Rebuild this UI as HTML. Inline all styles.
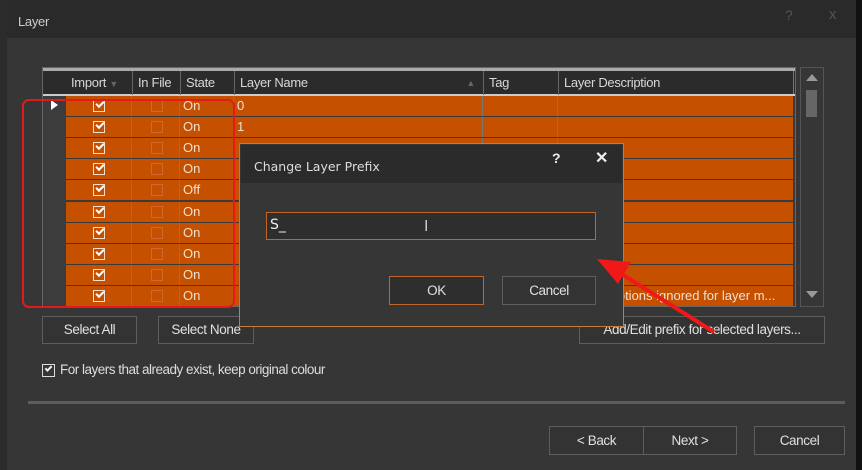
<!DOCTYPE html>
<html><head><meta charset="utf-8"><style>
*{margin:0;padding:0;box-sizing:border-box}
body{width:862px;height:470px;background:#363636;position:relative;overflow:hidden;font-family:"Liberation Sans",sans-serif;color:#ddd;font-size:13px}
.a{position:absolute}
.btn{position:absolute;border:1px solid #5e5e5e;background:#333;color:#e0e0e0;text-align:center;font-size:13.5px;letter-spacing:-0.4px}
.row{position:absolute;left:66px;width:727px;height:20px}
.c{position:absolute;top:0;height:20px;background:#c55000;line-height:20px;color:#f0e0d0;font-size:13px;padding-left:3px}
.hd{position:absolute;top:0;height:24px;line-height:24px;color:#d8d8d8;font-size:13px;letter-spacing:-0.3px;padding-left:5px;border-left:1px solid #666}
.cb{position:absolute;left:27px;top:4px;width:12px;height:12px;border:1.5px solid #f4e0d0}
.cb:after{content:"";position:absolute;left:2px;top:0px;width:6px;height:3px;border-left:2px solid #fff;border-bottom:2px solid #fff;transform:rotate(-45deg)}
.fb{position:absolute;left:19px;top:4px;width:12px;height:12px;border:1px solid #cf6a2a}
</style></head><body>
<div class="a" style="left:0;top:0;width:862px;height:38px;background:#2a2a2a"></div>
<div class="a" style="left:0;top:0;width:7px;height:470px;background:#2c2c2c"></div>
<div class="a" style="left:856px;top:0;width:6px;height:470px;background:#111"></div>
<div class="a" style="left:18px;top:14px;font-size:13px;color:#ccc;letter-spacing:-0.3px">Layer</div>
<div class="a" style="left:785px;top:7px;color:#555;font-size:14px">?</div>
<div class="a" style="left:829px;top:6px;color:#555;font-size:15px">x</div>

<!-- grid -->
<div class="a" style="left:42px;top:67px;width:754px;height:240px;border:1px solid #666;background:#3a3a3a"></div>
<div class="a" style="left:43px;top:68px;width:752px;height:3px;background:#aaa"></div>
<div class="a" style="left:43px;top:71px;width:752px;height:23px;background:#2b2b2b"></div>
<div class="a" style="left:43px;top:94px;width:752px;height:2px;background:#ccc"></div>
<div class="hd" style="left:66px;top:71px;border:none;width:66px">Import <span style="color:#666;font-size:9px">▼</span></div>
<div class="hd" style="left:132px;top:71px">In File</div>
<div class="hd" style="left:180px;top:71px">State</div>
<div class="hd" style="left:234px;top:71px;width:249px">Layer Name<span style="position:absolute;right:8px;color:#666;font-size:9px">▲</span></div>
<div class="hd" style="left:483px;top:71px">Tag</div>
<div class="hd" style="left:558px;top:71px">Layer Description</div>
<div class="a" style="left:793px;top:71px;width:1px;height:23px;background:#777"></div>
<div class="a" style="left:44px;top:96px;width:22px;height:210px;background:#3c3c3c"></div>
<div class="a" style="left:51px;top:100px;width:0;height:0;border-left:7px solid #fff;border-top:5px solid transparent;border-bottom:5px solid transparent"></div>
<div id="rows"></div>
<script>
var st=["On","On","On","On","Off","On","On","On","On","On"];var h="";
for(var i=0;i<10;i++){var y=96+i*21.1;
h+='<div class="row" style="top:'+y+'px;background:#777">'+
'<div class="c" style="left:0;width:65px"><div class="cb"></div></div>'+
'<div class="c" style="left:66px;width:47px"><div class="fb"></div></div>'+
'<div class="c" style="left:114px;width:53px">'+st[i]+'</div>'+
'<div class="c" style="left:168px;width:248px">'+(i<2?i:'')+'</div>'+
'<div class="c" style="left:417px;width:74px"></div>'+
'<div class="c" style="left:492px;width:235px">'+(i==9?'<span style="padding-left:20px">Descriptions ignored for layer m...</span>':'')+'</div></div>';}
document.getElementById('rows').innerHTML=h;
</script>
<!-- scrollbar -->
<div class="a" style="left:800px;top:67px;width:24px;height:240px;border:1px solid #555;background:#363636"></div>
<div class="a" style="left:806px;top:74px;width:0;height:0;border-bottom:7px solid #999;border-left:6px solid transparent;border-right:6px solid transparent"></div>
<div class="a" style="left:806px;top:90px;width:11px;height:27px;background:#666"></div>
<div class="a" style="left:806px;top:291px;width:0;height:0;border-top:7px solid #999;border-left:6px solid transparent;border-right:6px solid transparent"></div>

<div class="a" style="left:22px;top:99px;width:213px;height:209px;border:2px solid #e21a1a;border-radius:7px"></div>

<div class="btn" style="left:42px;top:316px;width:95px;height:28px;line-height:26px">Select All</div>
<div class="btn" style="left:158px;top:316px;width:96px;height:28px;line-height:26px">Select None</div>
<div class="btn" style="left:579px;top:316px;width:246px;height:28px;line-height:26px">Add/Edit prefix for selected layers...</div>
<div class="a" style="left:42px;top:364px;width:13px;height:13px;border:1px solid #ddd"></div>
<div class="a" style="left:45px;top:366px;width:7px;height:4px;border-left:2px solid #eee;border-bottom:2px solid #eee;transform:rotate(-45deg)"></div>
<div class="a" style="left:60px;top:362px;font-size:13.5px;letter-spacing:-0.5px;color:#ddd">For layers that already exist, keep original colour</div>
<div class="a" style="left:28px;top:401px;width:817px;height:3px;background:#5c5c5c"></div>
<div class="btn" style="left:549px;top:426px;width:95px;height:29px;line-height:27px">&lt; Back</div>
<div class="btn" style="left:643px;top:426px;width:94px;height:29px;line-height:27px">Next &gt;</div>
<div class="btn" style="left:754px;top:426px;width:91px;height:29px;line-height:27px">Cancel</div>

<!-- dialog -->
<div class="a" style="left:239px;top:143px;width:385px;height:184px;border:1.5px solid #c77a3a;background:#363636"></div>
<div class="a" style="left:241px;top:145px;width:381px;height:38px;background:#2b2b2b"></div>
<div class="a" style="left:254px;top:159px;font-size:13.5px;color:#ddd;font-family:'DejaVu Sans',sans-serif;font-size:12.5px">Change Layer Prefix</div>
<div class="a" style="left:552px;top:150px;font-size:14px;font-weight:bold;color:#eee">?</div>
<div class="a" style="left:595px;top:148px;font-size:16px;font-weight:bold;color:#eee">✕</div>
<div class="a" style="left:266px;top:212px;width:330px;height:28px;border:1.5px solid #c0662a;background:#2e2e2e"></div>
<div class="a" style="left:270px;top:217px;font-size:14px;color:#eee;font-family:'DejaVu Sans',sans-serif">S_</div>
<div class="a" style="left:424px;top:218px;font-size:16px;color:#ccc">I</div>
<div class="btn" style="left:389px;top:276px;width:95px;height:29px;line-height:27px;border:1.5px solid #c0662a;background:#2e2e2e">OK</div>
<div class="btn" style="left:502px;top:276px;width:94px;height:29px;line-height:27px">Cancel</div>

<svg class="a" style="left:0;top:0" width="862" height="470">
<line x1="714" y1="332" x2="612" y2="268" stroke="#f01818" stroke-width="4"/>
<polygon points="597,259 631,262 618,284" fill="#f01818"/>
</svg>
</body></html>
